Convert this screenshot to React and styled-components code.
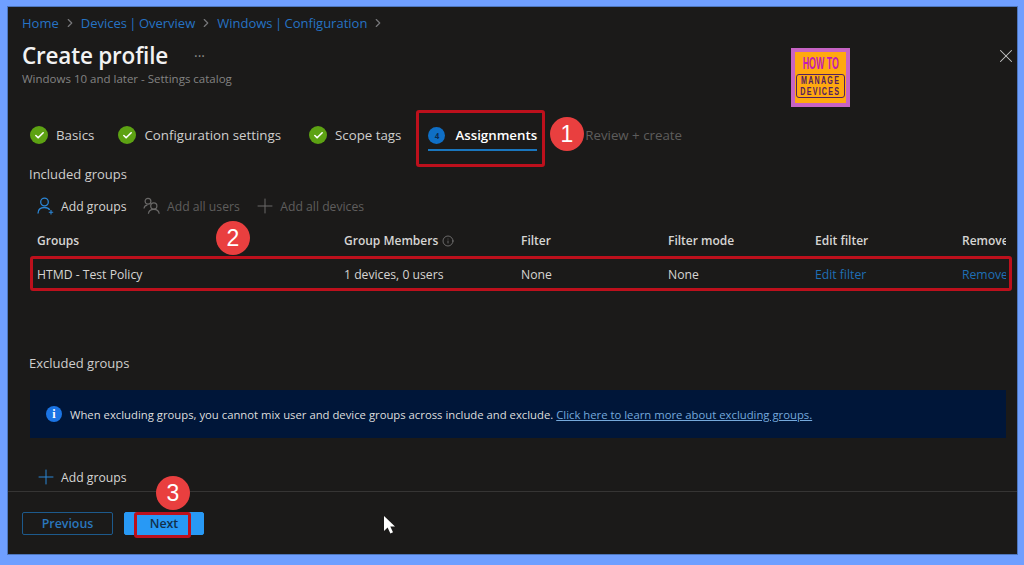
import styled, { createGlobalStyle } from "styled-components";
import { ChevronRight, Check, Plus, X, Info } from "lucide-react";

const GlobalStyle = createGlobalStyle`
  html, body {
    margin: 0;
    height: 100%;
    background: #6f9fff;
  }
  body {
    font-family: "Open Sans", "Noto Sans", "Liberation Sans", sans-serif;
    font-size: 12.2px;
    overflow: hidden;
  }
`;

const Page = styled.div`
  width: 1024px;
  height: 565px;
  padding: 7px 7px 11px 8px;
  box-sizing: border-box;
`;

const Panel = styled.main`
  position: relative;
  height: 100%;
  display: flex;
  flex-direction: column;
  background: #1b1a19;
  color: #d6d5d3;
  box-shadow: 0 0 0 1px #4d76bd;
`;

const Content = styled.div`
  flex: 1;
  min-height: 0;
  padding: 0 14px;
`;

const Breadcrumb = styled.nav`
  display: flex;
  align-items: center;
  height: 18px;
  margin-top: 7px;
  font-size: 13px;
  word-spacing: -1px;
  color: #2673c4;

  svg {
    color: #77777a;
    margin: 0 4px;
  }
`;

const TitleRow = styled.div`
  position: relative;
  display: flex;
  align-items: center;
  height: 32px;
  margin-top: 7px;
`;

const Title = styled.h1`
  margin: 0;
  font-size: 22.5px;
  font-weight: 600;
  letter-spacing: -0.2px;
  color: #f2f2f2;
`;

const More = styled.span`
  margin: 0 0 0 26px;
  font-size: 14px;
  color: #8a8a8a;
`;

const Subtitle = styled.div`
  font-size: 11.5px;
  line-height: 16px;
  color: #838383;
`;

const CloseButton = styled.span`
  position: absolute;
  right: -14px;
  top: 6px;
  display: flex;
  color: #c8c8c8;
`;

const Logo = styled.div`
  position: absolute;
  left: 783px;
  top: 41px;
  width: 59px;
  height: 59px;
  box-sizing: border-box;
  border: 4px solid #c763c4;
  background: #ffa90f;
  display: flex;
  flex-direction: column;
  align-items: center;
  font-family: "Liberation Sans", sans-serif;
  font-weight: 700;
`;

const LogoTop = styled.span`
  margin-top: 3px;
  font-size: 16px;
  line-height: 18px;
  color: #c21bb6;
  transform: scaleX(0.55);
  white-space: nowrap;
`;

const LogoBox = styled.span`
  margin-top: 1px;
  width: 49px;
  height: 24px;
  box-sizing: border-box;
  border: 1px solid #54205f;
  border-radius: 3px;
  display: flex;
  flex-direction: column;
  align-items: center;
  font-size: 11.5px;
  line-height: 11px;
  color: #54205f;
  white-space: nowrap;

  span {
    transform: scaleX(0.62);
    letter-spacing: 2px;
  }
`;

const Tabs = styled.div`
  display: flex;
  align-items: center;
  height: 32px;
  margin: 32px 0 0 8px;
  font-size: 13.3px;
`;

const Tab = styled.div`
  display: flex;
  align-items: center;
  gap: 8px;
  margin-right: ${({ $gap }) => $gap}px;
  font-weight: ${({ $active }) => ($active ? 600 : 400)};
  color: ${({ $active, $muted }) => ($active ? "#ffffff" : $muted ? "#5e5d5c" : "#cfcecd")};
  white-space: nowrap;
`;

const ActiveTab = styled(Tab)`
  position: relative;
  gap: 10px;

  &::after {
    content: "";
    position: absolute;
    left: 0;
    right: 0;
    bottom: -7px;
    height: 2px;
    background: #1a76bd;
  }
`;

const CheckDot = styled.span`
  width: 18px;
  height: 18px;
  border-radius: 50%;
  background: #5da213;
  color: #fff;
  display: flex;
  align-items: center;
  justify-content: center;
`;

const StepDot = styled(CheckDot)`
  width: 17px;
  height: 17px;
  background: #0f6fc6;
  color: #0b2c50;
  font-size: 8px;
  font-weight: 700;
`;

const SectionLabel = styled.div`
  margin: ${({ $top }) => $top}px 0 0 7px;
  font-size: 13px;
  line-height: 18px;
  color: #cfcecd;
`;

const Toolbar = styled.div`
  display: flex;
  align-items: center;
  height: 24px;
  margin: ${({ $top }) => $top}px 0 0 15px;
`;

const ToolButton = styled.div`
  display: flex;
  align-items: center;
  gap: 7px;
  margin-right: 16.5px;
  color: ${({ $off }) => ($off ? "#5f5e5d" : "#d6d5d3")};

  svg {
    color: ${({ $off }) => ($off ? "#6a6968" : "#2b86d6")};
  }
`;

const BigPlus = styled(Plus)`
  margin: 0 -3.5px;
`;

const TableGrid = styled.div`
  display: grid;
  grid-template-columns: 307px 177px 147px 147px 147px 44px;
  margin-left: 15px;
  align-items: center;
`;

const HeadCell = styled.div`
  height: 24px;
  margin-top: 11px;
  line-height: 24px;
  font-size: 12px;
  font-weight: 600;
  color: #d6d5d3;
  white-space: nowrap;
  overflow: hidden;
  display: flex;
  align-items: center;
  gap: 4px;

  svg {
    color: #8b8a89;
  }
`;

const Cell = styled.div`
  height: 18px;
  margin-top: ${({ $link }) => ($link ? 13 : 12)}px;
  line-height: 18px;
  font-size: 12.2px;
  white-space: nowrap;
  overflow: hidden;
  color: ${({ $link }) => ($link ? "#1f6fb5" : "#d6d5d3")};
`;

const InfoBar = styled.div`
  height: 48px;
  margin: 18px -3px 0 8px;
  padding-left: 16px;
  display: flex;
  align-items: center;
  gap: 8px;
  background: #001639;
  color: #dedede;
  font-size: 11.3px;
  white-space: nowrap;

  a {
    color: #75a9dc;
    text-decoration: underline;
  }
`;

const InfoIcon = styled.span`
  width: 16px;
  height: 16px;
  border-radius: 50%;
  background: #1b74e4;
  color: #fff;
  font: 700 12px/16px "Liberation Serif", serif;
  text-align: center;
`;

const Footer = styled.footer`
  height: 63px;
  box-sizing: border-box;
  border-top: 1px solid #363534;
  padding: 20px 14px 0;
  display: flex;
  gap: 11px;
`;

const FooterButton = styled.button`
  width: ${({ $w }) => $w}px;
  height: 23px;
  padding: 0;
  border-radius: 2px;
  border: 1px solid ${({ $primary }) => ($primary ? "#2899f5" : "#1d5a8c")};
  background: ${({ $primary }) => ($primary ? "#2899f5" : "transparent")};
  color: ${({ $primary }) => ($primary ? "#12304a" : "#2a76bd")};
  font-family: inherit;
  font-size: 12.4px;
  font-weight: 600;
`;

const RedBox = styled.div`
  position: absolute;
  left: ${({ $x }) => $x}px;
  top: ${({ $y }) => $y}px;
  width: ${({ $w }) => $w}px;
  height: ${({ $h }) => $h}px;
  box-sizing: border-box;
  border: 3px solid #bd101c;
  border-radius: 3px;
  pointer-events: none;
`;

const Badge = styled.div`
  position: absolute;
  left: ${({ $x }) => $x - 17}px;
  top: ${({ $y }) => $y - 17}px;
  width: 34px;
  height: 34px;
  border-radius: 50%;
  background: #e93f3f;
  color: #fff;
  font-family: "Liberation Sans", sans-serif;
  font-size: 23px;
  line-height: 34px;
  text-align: center;
`;

const Cursor = styled.svg`
  position: absolute;
  left: 375px;
  top: 508px;
`;

const columns = ["Filter", "Filter mode", "Edit filter", "Remove"];

function Done({ label, gap }) {
  return (
    <Tab $gap={gap}>
      <CheckDot>
        <Check size={11} strokeWidth={3.5} />
      </CheckDot>
      {label}
    </Tab>
  );
}

function AddUserIcon() {
  return (
    <svg width="17" height="18" viewBox="0 0 17 18" fill="none" stroke="currentColor" strokeWidth="1.3">
      <circle cx="7.5" cy="5" r="3.8" />
      <path d="M1 16.5c0-4 2.6-6 6.5-6 2.4 0 4.2.8 5.2 2.4" />
      <path d="M14 13v4.4M11.8 15.2h4.4" strokeWidth="1.1" />
    </svg>
  );
}

function AddAllUsersIcon() {
  return (
    <svg width="17" height="18" viewBox="0 0 17 18" fill="none" stroke="currentColor" strokeWidth="1.2">
      <circle cx="5" cy="4.2" r="2.9" />
      <path d="M1 11.5c.3-2 1.6-3.2 3.4-3.3" />
      <circle cx="10.8" cy="9" r="3.1" />
      <path d="M5.4 16.8c.3-2.6 2.4-4.4 5.4-4.4s5.1 1.8 5.4 4.4" />
    </svg>
  );
}

export default function App() {
  return (
    <Page>
      <GlobalStyle />
      <Panel>
        <Content>
          <Breadcrumb>
            Home <ChevronRight size={14} /> Devices | Overview <ChevronRight size={14} /> Windows | Configuration{" "}
            <ChevronRight size={14} />
          </Breadcrumb>
          <TitleRow>
            <Title>Create profile</Title>
            <More>···</More>
            <CloseButton>
              <X size={22} strokeWidth={1.1} />
            </CloseButton>
          </TitleRow>
          <Subtitle>Windows 10 and later - Settings catalog</Subtitle>
          <Logo>
            <LogoTop>HOW TO</LogoTop>
            <LogoBox>
              <span>MANAGE</span>
              <span>DEVICES</span>
            </LogoBox>
          </Logo>

          <Tabs>
            <Done label="Basics" gap={24} />
            <Done label="Configuration settings" gap={28} />
            <Done label="Scope tags" gap={27} />
            <ActiveTab $active $gap={48}>
              <StepDot>4</StepDot>
              Assignments
            </ActiveTab>
            <Tab $muted>Review + create</Tab>
          </Tabs>

          <SectionLabel $top={14}>Included groups</SectionLabel>
          <Toolbar $top={11}>
            <ToolButton>
              <AddUserIcon />
              Add groups
            </ToolButton>
            <ToolButton $off>
              <AddAllUsersIcon />
              Add all users
            </ToolButton>
            <ToolButton $off>
              <BigPlus size={24} strokeWidth={1} />
              Add all devices
            </ToolButton>
          </Toolbar>

          <TableGrid>
            <HeadCell>Groups</HeadCell>
            <HeadCell>
              Group Members <Info size={12} strokeWidth={1.4} />
            </HeadCell>
            {columns.map((name) => (
              <HeadCell key={name}>{name}</HeadCell>
            ))}
            <Cell>HTMD - Test Policy</Cell>
            <Cell>1 devices, 0 users</Cell>
            <Cell>None</Cell>
            <Cell>None</Cell>
            <Cell $link>Edit filter</Cell>
            <Cell $link>Remove</Cell>
          </TableGrid>

          <SectionLabel $top={70}>Excluded groups</SectionLabel>
          <InfoBar>
            <InfoIcon>i</InfoIcon>
            <span>
              When excluding groups, you cannot mix user and device groups across include and exclude.{" "}
              <a>Click here to learn more about excluding groups.</a>
            </span>
          </InfoBar>
          <Toolbar $top={27}>
            <ToolButton>
              <BigPlus size={24} strokeWidth={1} />
              Add groups
            </ToolButton>
          </Toolbar>
        </Content>

        <Footer>
          <FooterButton $w={91}>Previous</FooterButton>
          <FooterButton $w={80} $primary>
            Next
          </FooterButton>
        </Footer>

        <RedBox $x={408} $y={103} $w={129} $h={57} />
        <RedBox $x={22} $y={249} $w={982} $h={35} />
        <RedBox $x={126} $y={505} $w={57} $h={26} />
        <Badge $x={559} $y={127}>1</Badge>
        <Badge $x={225} $y={231}>2</Badge>
        <Badge $x={165} $y={486}>3</Badge>
        <Cursor width="14" height="20" viewBox="0 0 14 20">
          <path d="M1 1 L1 16 L4.6 12.6 L7.4 18.4 L10 17.2 L7.3 11.6 L12 11.4 Z" fill="#fff" />
        </Cursor>
      </Panel>
    </Page>
  );
}
